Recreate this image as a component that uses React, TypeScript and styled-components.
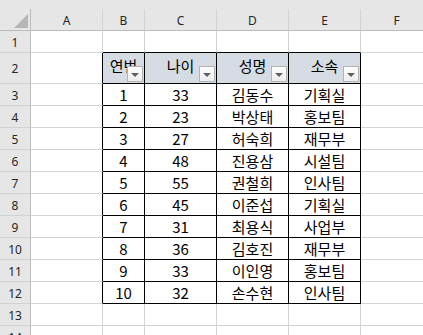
import { Fragment } from "react";
import styled, { createGlobalStyle } from "styled-components";

const GlobalStyle = createGlobalStyle`
  html, body {
    margin: 0;
    padding: 0;
    background: #ffffff;
    overflow: hidden;
  }
`;

const columns = ["A", "B", "C", "D", "E", "F"];
const header = ["연번", "나이", "성명", "소속"];
const rows: [number, number, string, string][] = [
  [1, 33, "김동수", "기획실"],
  [2, 23, "박상태", "홍보팀"],
  [3, 27, "허숙희", "재무부"],
  [4, 48, "진용삼", "시설팀"],
  [5, 55, "권철희", "인사팀"],
  [6, 45, "이준섭", "기획실"],
  [7, 31, "최용식", "사업부"],
  [8, 36, "김호진", "재무부"],
  [9, 33, "이인영", "홍보팀"],
  [10, 32, "손수현", "인사팀"],
];

const Sheet = styled.div`
  display: grid;
  grid-template-columns: 31px 72px 42px 72px 72px 72px 72px;
  grid-template-rows: 9px 22px 22px 31px repeat(12, 22px);
  width: 423px;
  height: 335px;
  overflow: hidden;
  font-family: "Noto Sans CJK KR", "Noto Sans", sans-serif;
`;

const TopStrip = styled.div`
  grid-column: 1 / -1;
  background: #e6e6e6;
`;

const Corner = styled.div`
  background: #e6e6e6;
  border-right: 1px solid #bcbcbc;
  border-bottom: 1px solid #bcbcbc;
  display: flex;
  align-items: flex-end;
  justify-content: flex-end;
  padding: 0 2px 2px 0;
`;

const ColHeader = styled.div`
  background: #e6e6e6;
  border-right: 1px solid #d2d2d2;
  border-bottom: 1px solid #bcbcbc;
  display: flex;
  align-items: center;
  justify-content: center;
  font-family: "Noto Sans", "Liberation Sans", sans-serif;
  font-size: 12px;
  color: #262626;
  padding-top: 1px;
`;

const RowHeader = styled.div`
  background: #e6e6e6;
  border-right: 1px solid #bcbcbc;
  border-bottom: 1px solid #d2d2d2;
  display: flex;
  align-items: center;
  justify-content: center;
  font-family: "Noto Sans", "Liberation Sans", sans-serif;
  font-size: 12px;
  color: #262626;
  padding-top: 1px;
`;

const Cell = styled.div<{ $rightDark?: boolean; $bottomDark?: boolean; $head?: boolean }>`
  position: relative;
  background: ${(p) => (p.$head ? "#d6dce4" : "#ffffff")};
  border-right: 1px solid ${(p) => (p.$rightDark ? "#000000" : "#d4d4d4")};
  border-bottom: 1px solid ${(p) => (p.$bottomDark ? "#000000" : "#d4d4d4")};
  display: flex;
  align-items: center;
  justify-content: center;
  font-size: 15px;
  color: #000000;
  white-space: nowrap;
  overflow: hidden;
  padding-bottom: ${(p) => (p.$head ? "5px" : "0")};
`;

const FilterButton = styled.span`
  position: absolute;
  right: 1px;
  bottom: 1px;
  width: 16px;
  height: 16px;
  box-sizing: border-box;
  border: 1px solid #b4b4b4;
  background: linear-gradient(#fdfdfd, #ededed);
  display: flex;
  align-items: center;
  justify-content: center;

  &::after {
    content: "";
    border-left: 4px solid transparent;
    border-right: 4px solid transparent;
    border-top: 4px solid #5f5f5f;
    margin-top: 1px;
  }
`;

const CornerMark = () => (
  <svg width="14" height="14" viewBox="0 0 14 14">
    <polygon points="14,0 14,14 0,14" fill="#b6b6b6" />
  </svg>
);

const App = () => {
  const rowNumbers = Array.from({ length: 14 }, (_, i) => i + 1);

  const cellText = (r: number, c: number) => {
    if (c < 1 || c > 4) return null;
    if (r === 2) return header[c - 1];
    if (r >= 3 && r <= 12) return rows[r - 3][c - 1];
    return null;
  };

  return (
    <>
      <GlobalStyle />
      <Sheet>
        <TopStrip />
        <Corner>
          <CornerMark />
        </Corner>
        {columns.map((col) => (
          <ColHeader key={col}>{col}</ColHeader>
        ))}
        {rowNumbers.map((r) => (
          <Fragment key={r}>
            <RowHeader>{r}</RowHeader>
            {columns.map((col, c) => {
              const inRows = r >= 2 && r <= 12;
              const head = r === 2 && c >= 1 && c <= 4;
              return (
                <Cell
                  key={`${col}${r}`}
                  $head={head}
                  $rightDark={inRows && c <= 4}
                  $bottomDark={r <= 12 && c >= 1 && c <= 4}
                >
                  {cellText(r, c)}
                  {head && <FilterButton />}
                </Cell>
              );
            })}
          </Fragment>
        ))}
      </Sheet>
    </>
  );
};

export default App;
